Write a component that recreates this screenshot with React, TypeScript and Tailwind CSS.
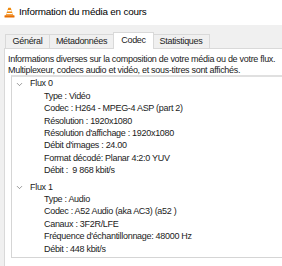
import { ChevronDown } from 'lucide-react';

const font = { fontFamily: '"Liberation Sans", Arial, sans-serif' };

function VlcIcon() {
  return (
    <svg width="11" height="11" viewBox="0 0 11 11">
      <path d="M4.3 0.8 L6.7 0.8 L9.2 8.2 L1.8 8.2 Z" fill="#f18a0c" />
      <path d="M3.6 3 L7.4 3 L7.9 4.5 L3.1 4.5 Z" fill="#ffffff" />
      <path d="M2.6 6 L8.4 6 L8.9 7.3 L2.1 7.3 Z" fill="#ffffff" />
      <rect x="0.5" y="8.2" width="10" height="2.3" rx="0.6" fill="#e86f00" />
    </svg>
  );
}

const tabs = [
  { label: 'Général', w: 'w-[45px]', active: false },
  { label: 'Métadonnées', w: 'w-[65px]', active: false },
  { label: 'Codec', w: 'w-[41px]', active: true },
  { label: 'Statistiques', w: 'w-[58px]', active: false },
];

const streams = [
  {
    name: 'Flux 0',
    items: [
      'Type : Vidéo',
      'Codec : H264 - MPEG-4 ASP (part 2)',
      'Résolution : 1920x1080',
      "Résolution d'affichage : 1920x1080",
      "Débit d'images : 24.00",
      'Format décodé: Planar 4:2:0 YUV',
      'Débit :\u00a0 9 868 kbit/s',
    ],
  },
  {
    name: 'Flux 1',
    items: [
      'Type : Audio',
      'Codec : A52 Audio (aka AC3) (a52 )',
      'Canaux : 3F2R/LFE',
      "Fréquence d'échantillonnage: 48000 Hz",
      'Débit : 448 kbit/s',
    ],
  },
];

export default function App() {
  return (
    <div className="w-[282px] h-[266px] overflow-hidden bg-white text-[#1b1b1b] flex flex-col" style={font}>
      {/* Title bar */}
      <div className="h-[25px] flex items-center pl-[4px] gap-[4px] bg-white shrink-0">
        <VlcIcon />
        <span className="text-[9.9px] tracking-[-0.2px] text-black">Information du média en cours</span>
      </div>

      {/* Tab strip */}
      <div className="bg-[#f0f0f0] h-[23px] flex items-end pl-[5px] shrink-0">
        {tabs.map((t) =>
          t.active ? (
            <div
              key={t.label}
              className={`${t.w} h-[17px] -mb-[1px] -mx-[1px] bg-white border border-b-0 border-[#d9d9d9] flex items-center justify-center text-[9px] tracking-[-0.3px] relative z-10`}
            >
              {t.label}
            </div>
          ) : (
            <div
              key={t.label}
              className={`${t.w} h-[14px] bg-[#f0f0f0] border border-b-0 border-[#d9d9d9] -ml-[1px] first:ml-0 flex items-center justify-center text-[9px] tracking-[-0.3px] text-[#222]`}
            >
              {t.label}
            </div>
          )
        )}
      </div>

      {/* Panel */}
      <div className="flex-1 bg-[#f0f0f0] pl-[4px]">
        <div className="h-full bg-white border-l border-t border-[#d9d9d9] pl-[3px] pt-[5px]">
          <p className="text-[9px] leading-[10.5px] tracking-[-0.3px] whitespace-nowrap">
            Informations diverses sur la composition de votre média ou de votre flux.
            <br />
            Multiplexeur, codecs audio et vidéo, et sous-titres sont affichés.
          </p>

          <div className="ml-[3px] w-[300px] h-[183px] border border-[#d5d5d5] border-t-2 border-t-[#e0e0e0] pt-[1px] text-[9px] tracking-[-0.3px] whitespace-nowrap">
            {streams.map((s, i) => (
              <div key={s.name} className={i > 0 ? 'mt-[4px]' : ''}>
                <div className="h-[12.4px] flex items-center pl-[3px]">
                  <span className="w-[15px] flex items-center">
                    <ChevronDown size={9} strokeWidth={1.6} className="text-[#555]" />
                  </span>
                  <span>{s.name}</span>
                </div>
                {s.items.map((it) => (
                  <div key={it} className="h-[12.4px] flex items-center pl-[32px]">
                    {it}
                  </div>
                ))}
              </div>
            ))}
          </div>
        </div>
      </div>
    </div>
  );
}
